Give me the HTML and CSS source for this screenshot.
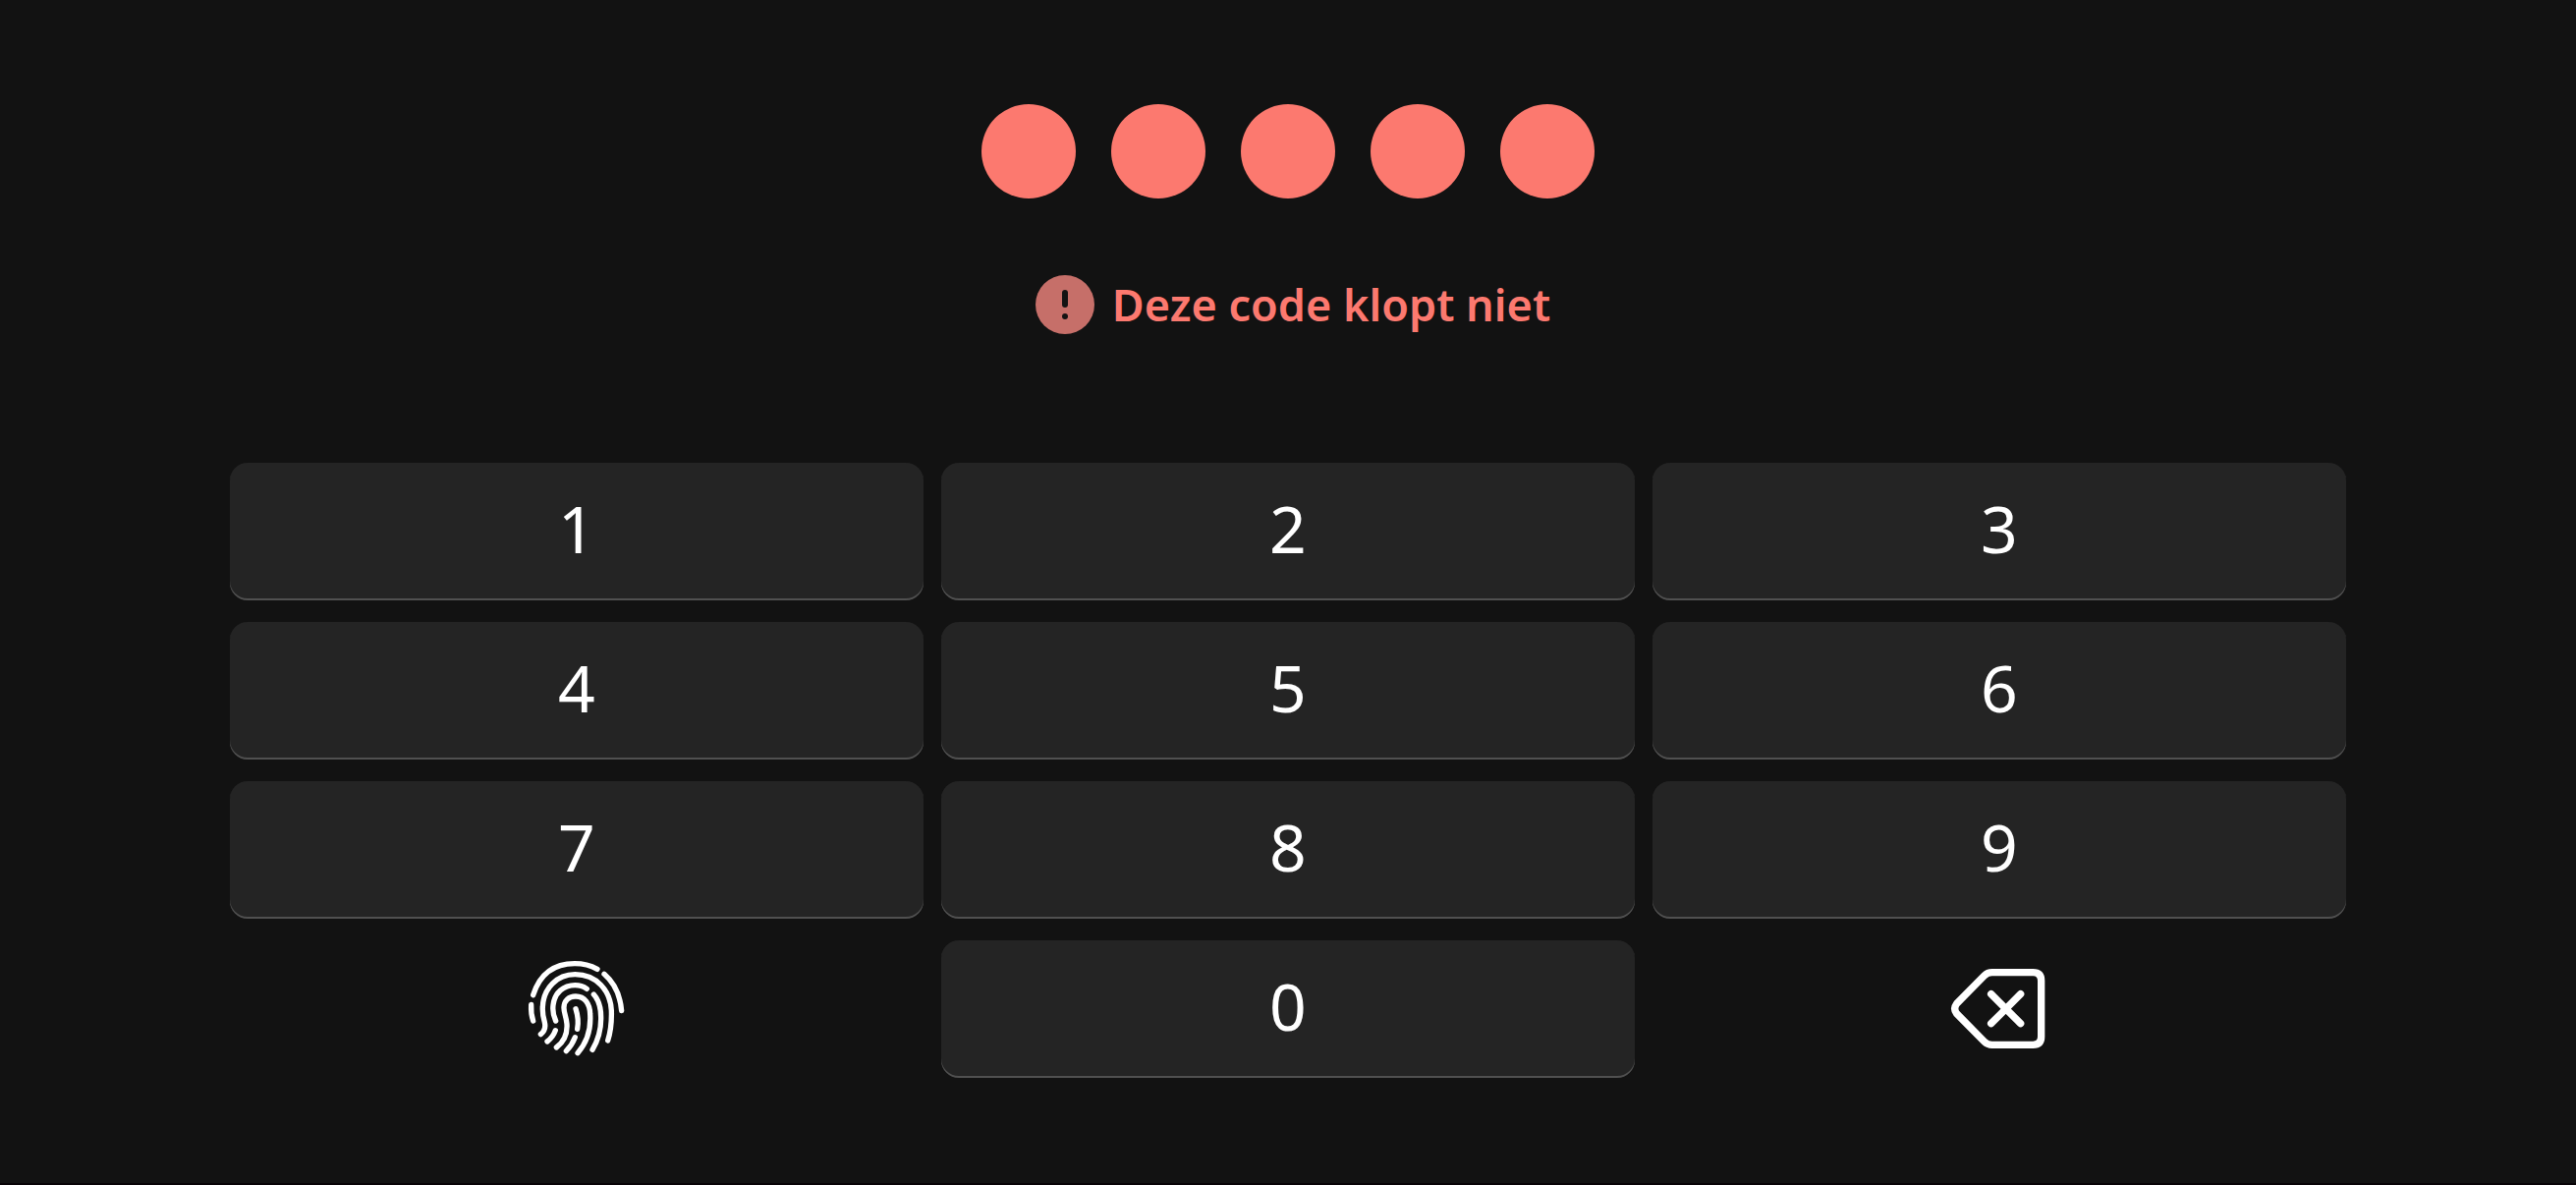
FILE: index.html
```html
<!DOCTYPE html>
<html lang="nl">
<head>
<meta charset="utf-8">
<meta name="viewport" content="width=device-width, initial-scale=1">
<title>Pincode</title>
<link rel="stylesheet" href="styles.css">
</head>
<body>
<main class="pin">
  <div class="dots">
    <span class="dot"></span>
    <span class="dot"></span>
    <span class="dot"></span>
    <span class="dot"></span>
    <span class="dot"></span>
  </div>
  <p class="error" role="alert">
    <svg class="error-icon" viewBox="0 0 60 60" aria-hidden="true">
      <circle class="error-disc" cx="30" cy="30" r="30"/>
      <path class="error-mark" d="M30 18V30"/>
      <circle class="error-point" cx="30" cy="42" r="3"/>
    </svg>
    <span>Deze code klopt niet</span>
  </p>
  <div class="keypad">
    <button class="key" type="button">1</button>
    <button class="key" type="button">2</button>
    <button class="key" type="button">3</button>
    <button class="key" type="button">4</button>
    <button class="key" type="button">5</button>
    <button class="key" type="button">6</button>
    <button class="key" type="button">7</button>
    <button class="key" type="button">8</button>
    <button class="key" type="button">9</button>
    <button class="key key-plain" type="button" aria-label="Vingerafdruk">
      <svg class="key-icon finger" viewBox="36 36 300 300" aria-hidden="true">
        <path d="M53 143C74 77 118 47 180 47C206 47 229 53 249 64"/>
        <path d="M270 79C300 105 319 145 323 191"/>
        <path d="M47 172C46 191 48 207 53 222"/>
        <path d="M76 263C87 254 92 242 88 226C83 208 81 195 82 180C84 122 126 80 181 80C247 80 289 130 292 190C293 223 290 254 281 282"/>
        <path d="M122 222C115 207 112 191 114 174C118 136 146 113 181 113C195 113 207 117 217 124"/>
        <path d="M238 141C253 158 260 181 260 210C261 248 252 280 234 310"/>
        <path d="M124 303C147 286 158 260 156 231C154 209 146 195 147 180C148 160 162 147 183 147C211 147 226 170 227 201C230 246 219 286 189 320"/>
        <path d="M183 185C190 207 192 226 188 247"/>
        <path d="M121 251C116 265 108 276 96 285"/>
        <path d="M181 272C175 288 166 302 154 314"/>
      </svg>
    </button>
    <button class="key" type="button">0</button>
    <button class="key key-plain" type="button" aria-label="Wissen">
      <svg class="key-icon erase" viewBox="45 36 300 300" aria-hidden="true">
        <path d="M173 74H298Q323 74 323 99V270Q323 295 298 295H173Q159 295 149 285L65 200Q53 185 65 169L149 84Q159 74 173 74Z"/>
        <path d="M170 140L260 230M260 140L170 230"/>
      </svg>
    </button>
  </div>
</main>
</body>
</html>
```
FILE: styles.css
```css
* {
  box-sizing: border-box;
}

body {
  margin: 0;
  background: #121212;
  color: #fff;
  font-family: "Noto Sans", sans-serif;
}

.pin {
  display: flex;
  flex-direction: column;
  align-items: center;
  padding: 106px 234px 107px;
  border-bottom: 2px solid #080306;
}

.dots {
  display: flex;
  gap: 36px;
}

.dot {
  width: 96px;
  height: 96px;
  border-radius: 50%;
  background: #fc796f;
}

.error {
  display: flex;
  align-items: center;
  gap: 18px;
  margin: 78px 0 131px;
  padding-left: 10px;
  color: #fc796f;
  font-size: 45px;
  font-weight: 600;
  line-height: 58px;
}

.error-icon {
  width: 60px;
  height: 60px;
}

.error-disc {
  fill: #c66f69;
}

.error-mark {
  stroke: #131313;
  stroke-width: 6;
  stroke-linecap: round;
}

.error-point {
  fill: #131313;
}

.keypad {
  display: grid;
  grid-template-columns: repeat(3, 1fr);
  gap: 22px 18px;
  width: 100%;
}

.key {
  display: flex;
  align-items: center;
  justify-content: center;
  height: 140px;
  padding: 0 0 8px;
  border: 0;
  border-radius: 18px;
  background: #242424;
  box-shadow: inset 0 -2px #505050;
  color: inherit;
  font-family: inherit;
  font-size: 66px;
  line-height: 80px;
}

.key-plain {
  padding: 0;
  background: none;
  box-shadow: none;
}

.key-icon {
  width: 100px;
  height: 100px;
  fill: none;
  stroke: #fff;
  stroke-linecap: round;
  stroke-linejoin: round;
}

.finger {
  stroke-width: 16;
}

.erase {
  stroke-width: 22;
}
```
